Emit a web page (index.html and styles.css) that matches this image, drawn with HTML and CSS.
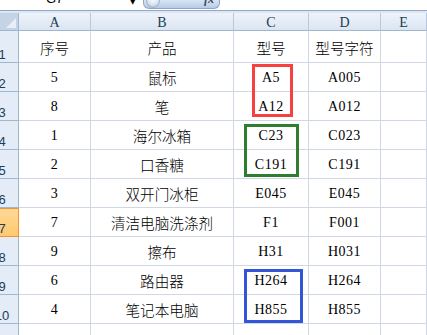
FILE: index.html
```html
<!DOCTYPE html>
<html>
<head>
<meta charset="utf-8">
<link rel="stylesheet" href="styles.css">
</head>
<body>
<div class="app">
  <div class="fbar">
    <div class="namebox"><span class="nb-text">G7</span></div>
    <div class="dd">&#9660;</div>
    <div class="fxbtn"><span class="knob"></span><span class="fx">fx</span></div>
    <div class="finput"></div>
  </div>
  <div class="sheet">
    <div class="corner"><span class="tri"></span></div>
    <div class="ch">A</div><div class="ch">B</div><div class="ch">C</div><div class="ch">D</div><div class="ch">E</div>

    <div class="rh r1"><span>1</span></div>
    <div class="c r1 zh">序号</div><div class="c r1 zh">产品</div><div class="c r1 zh">型号</div><div class="c r1 zh">型号字符</div><div class="c r1"></div>

    <div class="rh"><span>2</span></div>
    <div class="c en">5</div><div class="c zh">鼠标</div><div class="c en">A5</div><div class="c en">A005</div><div class="c"></div>

    <div class="rh"><span>3</span></div>
    <div class="c en">8</div><div class="c zh">笔</div><div class="c en">A12</div><div class="c en">A012</div><div class="c"></div>

    <div class="rh"><span>4</span></div>
    <div class="c en">1</div><div class="c zh">海尔冰箱</div><div class="c en">C23</div><div class="c en">C023</div><div class="c"></div>

    <div class="rh"><span>5</span></div>
    <div class="c en">2</div><div class="c zh">口香糖</div><div class="c en">C191</div><div class="c en">C191</div><div class="c"></div>

    <div class="rh"><span>6</span></div>
    <div class="c en">3</div><div class="c zh">双开门冰柜</div><div class="c en">E045</div><div class="c en">E045</div><div class="c"></div>

    <div class="rh sel"><span>7</span></div>
    <div class="c en">7</div><div class="c zh">清洁电脑洗涤剂</div><div class="c en">F1</div><div class="c en">F001</div><div class="c"></div>

    <div class="rh"><span>8</span></div>
    <div class="c en">9</div><div class="c zh">擦布</div><div class="c en">H31</div><div class="c en">H031</div><div class="c"></div>

    <div class="rh"><span>9</span></div>
    <div class="c en">6</div><div class="c zh">路由器</div><div class="c en">H264</div><div class="c en">H264</div><div class="c"></div>

    <div class="rh"><span>10</span></div>
    <div class="c en">4</div><div class="c zh">笔记本电脑</div><div class="c en">H855</div><div class="c en">H855</div><div class="c"></div>

    <div class="rh"><span>11</span></div>
    <div class="c"></div><div class="c"></div><div class="c"></div><div class="c"></div><div class="c"></div>
  </div>
  <div class="box red"></div>
  <div class="box green"></div>
  <div class="box blue"></div>
</div>
</body>
</html>
```
FILE: styles.css
```css
html, body {
  margin: 0;
  padding: 0;
  background: #ffffff;
  overflow: hidden;
}
.app {
  position: relative;
  width: 427px;
  height: 335px;
  overflow: hidden;
}
.fbar {
  height: 10px;
  display: flex;
  background: #ffffff;
  border-bottom: 1px solid #8fa8c8;
  position: relative;
}
.namebox {
  width: 130px;
  height: 10px;
  position: relative;
  overflow: hidden;
}
.nb-text {
  position: absolute;
  left: 46px;
  top: -9px;
  font: 13px "Liberation Sans", sans-serif;
  color: #000;
}
.dd {
  width: 13px;
  font-size: 7px;
  line-height: 7px;
  color: #000;
  margin-top: -1px;
  font-family: "DejaVu Sans", sans-serif;
}
.fxbtn {
  width: 77px;
  height: 9px;
  position: relative;
  overflow: hidden;
  background: linear-gradient(#d8e4f3, #b8cbe6);
  border: 1px solid #8ea7c9;
  border-top: none;
  border-radius: 0 0 6px 6px;
  box-sizing: border-box;
}
.knob {
  position: absolute;
  left: 2px;
  top: -8px;
  width: 12px;
  height: 14px;
  border-radius: 50%;
  background: radial-gradient(circle at 50% 40%, #ffffff, #d8e2ef 60%, #a8bad4);
  border: 1px solid #9fb3ce;
}
.fx {
  position: absolute;
  left: 60px;
  top: -8px;
  font: italic bold 12px "Liberation Serif", serif;
  color: #3a4a60;
}
.finput {
  flex: 1;
}
.sheet {
  border-top: 2px solid #dde6f2;
  display: grid;
  grid-template-columns: 19px 72px 143px 75px 72px 1fr;
  grid-template-rows: 18px 32px repeat(9, 29px) 30px;
}
.corner {
  background: #c5d3e6;
  border-right: 1px solid #9eb6ce;
  border-bottom: 1px solid #9eb6ce;
  box-sizing: border-box;
  position: relative;
}
.tri {
  position: absolute;
  right: 2px;
  bottom: 2px;
  width: 0;
  height: 0;
  border-left: 10px solid transparent;
  border-bottom: 10px solid #e9eff8;
}
.ch {
  background: linear-gradient(#eef3fa, #dbe5f2);
  border-right: 1px solid #b8c9df;
  border-bottom: 1px solid #9eb6ce;
  box-sizing: border-box;
  display: flex;
  align-items: center;
  justify-content: center;
  font: 14px "Liberation Serif", serif;
  color: #203d52;
  padding-top: 2px;
}
.rh {
  background: #e4ecf7;
  border-right: 1px solid #9eb6ce;
  border-bottom: 1px solid #9eb6ce;
  box-sizing: border-box;
  display: flex;
  align-items: flex-end;
  overflow: hidden;
  font: 13px "Liberation Sans", sans-serif;
  color: #203d52;
  padding-bottom: 1px;
}
.rh span {
  flex-shrink: 0;
  width: 20px;
  margin-left: -8px;
  text-align: center;
  line-height: 13px;
}
.rh.sel {
  background: linear-gradient(#ffd898, #ffc96e);
  border: 1px solid #f29436;
  border-left: none;
}
.c {
  border-right: 1px solid #d0d7e5;
  border-bottom: 1px solid #d0d7e5;
  box-sizing: border-box;
  display: flex;
  align-items: center;
  justify-content: center;
  color: #000;
  white-space: nowrap;
}
.zh {
  font: 300 14.6px "Noto Sans CJK SC", sans-serif;
  padding-top: 1px;
}
.en {
  font: 14px "Liberation Serif", serif;
  letter-spacing: 0.5px;
  padding-top: 2px;
}
.box {
  position: absolute;
  border: 3px solid;
  box-sizing: border-box;
}
.red {
  left: 252px;
  top: 64px;
  width: 41px;
  height: 53px;
  border-color: #f94040;
}
.green {
  left: 244px;
  top: 124px;
  width: 55px;
  height: 53px;
  border-color: #2f7d2f;
}
.blue {
  left: 244px;
  top: 269px;
  width: 59px;
  height: 54px;
  border-color: #3356d6;
}
```
